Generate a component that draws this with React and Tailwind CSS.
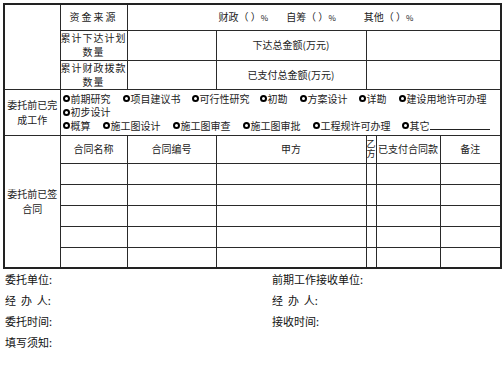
import React from "react";

const Ring = () => (
  <span className="inline-block w-[7px] h-[7px] rounded-full border-[2px] border-black mr-[1px]" />
);

const Item = ({ label, className = "" }) => (
  <span className={`inline-flex items-center ${className}`}>
    <Ring />
    {label}
  </span>
);

const cell = "border border-[#2a2a2a] p-0";

const App = () => {
  const rows = [0, 1, 2, 3, 4];
  return (
    <div
      className="w-[504px] h-[365px] bg-white text-[#222] pt-[3px] pl-[3px]"
      style={{ fontFamily: '"Noto Sans CJK SC", "Noto Sans", sans-serif' }}
    >
      <table className="table-fixed border-collapse border-2 border-[#222] w-[497px] text-[10px] leading-[14px]">
        <colgroup>
          <col className="w-[56px]" />
          <col className="w-[67px]" />
          <col className="w-[89px]" />
          <col className="w-[150px]" />
          <col className="w-[10px]" />
          <col className="w-[64px]" />
          <col className="w-[61px]" />
        </colgroup>
        <tbody>
          <tr className="h-[26px]">
            <td rowSpan={3} className={cell}></td>
            <td className={`${cell} text-center tracking-[2px]`}>资金来源</td>
            <td colSpan={5} className={cell}>
              <div className="flex pl-[91px] gap-[18px]">
                <span>财政（ ）<span className="text-[8px]">%</span></span>
                <span>自筹（ ）<span className="text-[8px]">%</span></span>
                <span className="ml-[10px]">其他（ ）<span className="text-[8px]">%</span></span>
              </div>
            </td>
          </tr>
          <tr className="h-[30px]">
            <td className={`${cell} text-center leading-[14px] tracking-[1px]`}>
              累计下达计划
              <br />
              数量
            </td>
            <td className={cell}></td>
            <td className={`${cell} text-center`}>下达总金额(万元)</td>
            <td colSpan={3} className={cell}></td>
          </tr>
          <tr className="h-[29px]">
            <td className={`${cell} text-center leading-[14px] tracking-[1px]`}>
              累计财政拨款
              <br />
              数量
            </td>
            <td className={cell}></td>
            <td className={`${cell} text-center`}>已支付总金额(万元)</td>
            <td colSpan={3} className={cell}></td>
          </tr>
          <tr className="h-[46px]">
            <td className={`${cell} text-center leading-[15px]`}>
              委托前已完
              <br />
              成工作
            </td>
            <td colSpan={6} className={`${cell} pl-[2px] leading-[13.5px]`}>
              <div className="flex">
                <Item label="前期研究" />
                <Item label="项目建议书" className="ml-[12px]" />
                <Item label="可行性研究" className="ml-[11px]" />
                <Item label="初勘" className="ml-[10px]" />
                <Item label="方案设计" className="ml-[12px]" />
                <Item label="详勘" className="ml-[11px]" />
                <Item label="建设用地许可办理" className="ml-[12px]" />
              </div>
              <div className="flex">
                <Item label="初步设计" />
              </div>
              <div className="flex">
                <Item label="概算" />
                <Item label="施工图设计" className="ml-[12px]" />
                <Item label="施工图审查" className="ml-[12px]" />
                <Item label="施工图审批" className="ml-[12px]" />
                <Item label="工程规许可办理" className="ml-[12px]" />
                <Item label="其它" className="ml-[11px]" />
                <span className="inline-block w-[60px] border-b border-[#222] h-[11px]" />
              </div>
            </td>
          </tr>
          <tr className="h-[28px]">
            <td rowSpan={6} className={`${cell} text-center leading-[15px]`}>
              委托前已签
              <br />
              合同
            </td>
            <td className={`${cell} text-center`}>合同名称</td>
            <td className={`${cell} text-center`}>合同编号</td>
            <td className={`${cell} text-center`}>甲方</td>
            <td className={`${cell} text-center text-[9px] leading-[10px] overflow-hidden`}>
              乙
              <br />
              方
            </td>
            <td className={`${cell} text-center whitespace-nowrap overflow-hidden`}>已支付合同款</td>
            <td className={`${cell} text-center`}>备注</td>
          </tr>
          {rows.map((r) => (
            <tr key={r} className="h-[21px]">
              <td className={cell}></td>
              <td className={cell}></td>
              <td className={cell}></td>
              <td className={cell}></td>
              <td className={cell}></td>
              <td className={cell}></td>
            </tr>
          ))}
        </tbody>
      </table>
      <div className="grid grid-cols-[267px_1fr] pl-[2px] text-[11px] leading-[21px] text-[#111]">
        <div>委托单位:</div>
        <div>前期工作接收单位:</div>
        <div className="whitespace-pre">经  办  人:</div>
        <div className="whitespace-pre">经  办  人:</div>
        <div>委托时间:</div>
        <div>接收时间:</div>
        <div>填写须知:</div>
        <div></div>
      </div>
    </div>
  );
};

export default App;
